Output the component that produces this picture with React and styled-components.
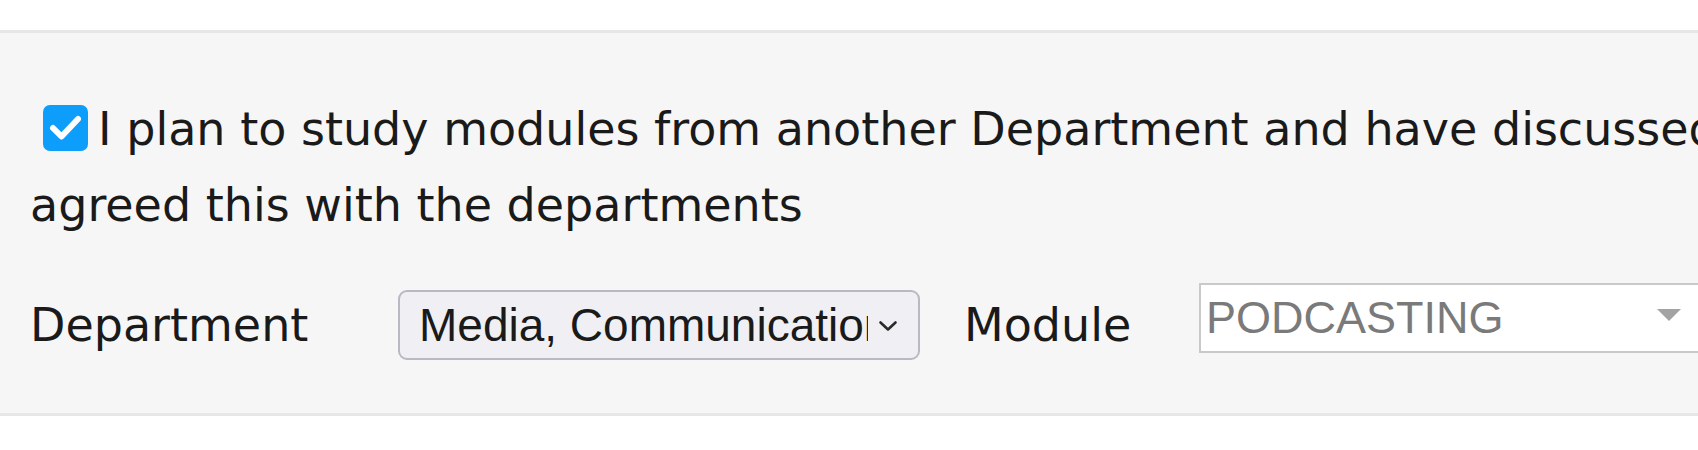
import styled, { createGlobalStyle } from "styled-components";

const GlobalStyle = createGlobalStyle`
    html, body {
        margin: 0;
        padding: 0;
        overflow: hidden;
        background: #ffffff;
    }
`;

const Page = styled.div`
    width: 100vw;
    overflow: hidden;
    padding-top: 30px;
`;

const Panel = styled.section`
    width: 2060px;
    box-sizing: border-box;
    padding: 58px 30px 53px;
    background-color: #f6f6f6;
    border-top: 3px solid #e7e7e7;
    border-bottom: 3px solid #e7e7e7;
    font-family: "DejaVu Sans", Verdana, sans-serif;
    color: #1a1a1a;
`;

const Statement = styled.label`
    display: block;
    font-size: 46px;
    line-height: 76px;
    white-space: nowrap;
`;

const Tick = styled.span`
    display: inline-block;
    width: 45px;
    height: 46px;
    margin: 0 10px 0 13px;
    vertical-align: -6px;
    border-radius: 7px;
    background-color: #0d9dfb;

    svg {
        display: block;
    }
`;

const Row = styled.div`
    display: flex;
    align-items: flex-end;
    margin-top: 40px;
`;

const FieldLabel = styled.span`
    width: ${(p) => p.$width}px;
    flex: none;
    font-size: 46px;
    line-height: 70px;
`;

const NativeSelect = styled.div`
    box-sizing: border-box;
    width: 522px;
    height: 70px;
    flex: none;
    display: flex;
    align-items: center;
    gap: 10px;
    padding: 1px 20px 0 19px;
    margin-right: 44px;
    border: 2px solid #b9b9c4;
    border-radius: 9px;
    background-color: #f0f0f4;
    font-family: "Liberation Sans", Arial, sans-serif;
    font-size: 46px;
    line-height: 65px;
    color: #1a1a1a;

    svg {
        flex: none;
    }
`;

const SelectText = styled.span`
    flex: 1;
    min-width: 0;
    overflow: hidden;
    white-space: nowrap;
`;

const Chosen = styled.div`
    box-sizing: border-box;
    width: 540px;
    height: 70px;
    flex: none;
    display: flex;
    align-items: center;
    margin-bottom: 7px;
    padding: 0 56px 0 5px;
    border: 2px solid #c9c9c9;
    background-color: #ffffff;
    font-family: "Liberation Sans", Arial, sans-serif;
    font-size: 45px;
    line-height: 66px;
    color: #7a7a7a;
`;

const Caret = styled.span`
    margin-left: auto;
    width: 0;
    height: 0;
    border-left: 12px solid transparent;
    border-right: 12px solid transparent;
    border-top: 12px solid #a3a3a3;
    margin-top: -6px;
`;

const App = () => {
    return (
        <>
            <GlobalStyle />
            <Page>
                <Panel>
                    <Statement>
                        <Tick>
                            <svg width="45" height="46" viewBox="0 0 45 46">
                                <path d="M10 23 L18.5 31.5 L35 14" fill="none" stroke="#ffffff" strokeWidth="6" strokeLinecap="round" strokeLinejoin="round" />
                            </svg>
                        </Tick>
                        I plan to study modules from another Department and have discussed and
                        <br />
                        agreed this with the departments
                    </Statement>
                    <Row>
                        <FieldLabel $width={368}>Department</FieldLabel>
                        <NativeSelect>
                            <SelectText>Media, Communications and Culture</SelectText>
                            <svg width="20" height="12" viewBox="0 0 20 12">
                                <path d="M2.5 2.5 L10 9.5 L17.5 2.5" fill="none" stroke="#2a2a2a" strokeWidth="2.6" strokeLinecap="round" strokeLinejoin="round" />
                            </svg>
                        </NativeSelect>
                        <FieldLabel $width={235}>Module</FieldLabel>
                        <Chosen>
                            PODCASTING
                            <Caret />
                        </Chosen>
                    </Row>
                </Panel>
            </Page>
        </>
    );
};

export default App;
